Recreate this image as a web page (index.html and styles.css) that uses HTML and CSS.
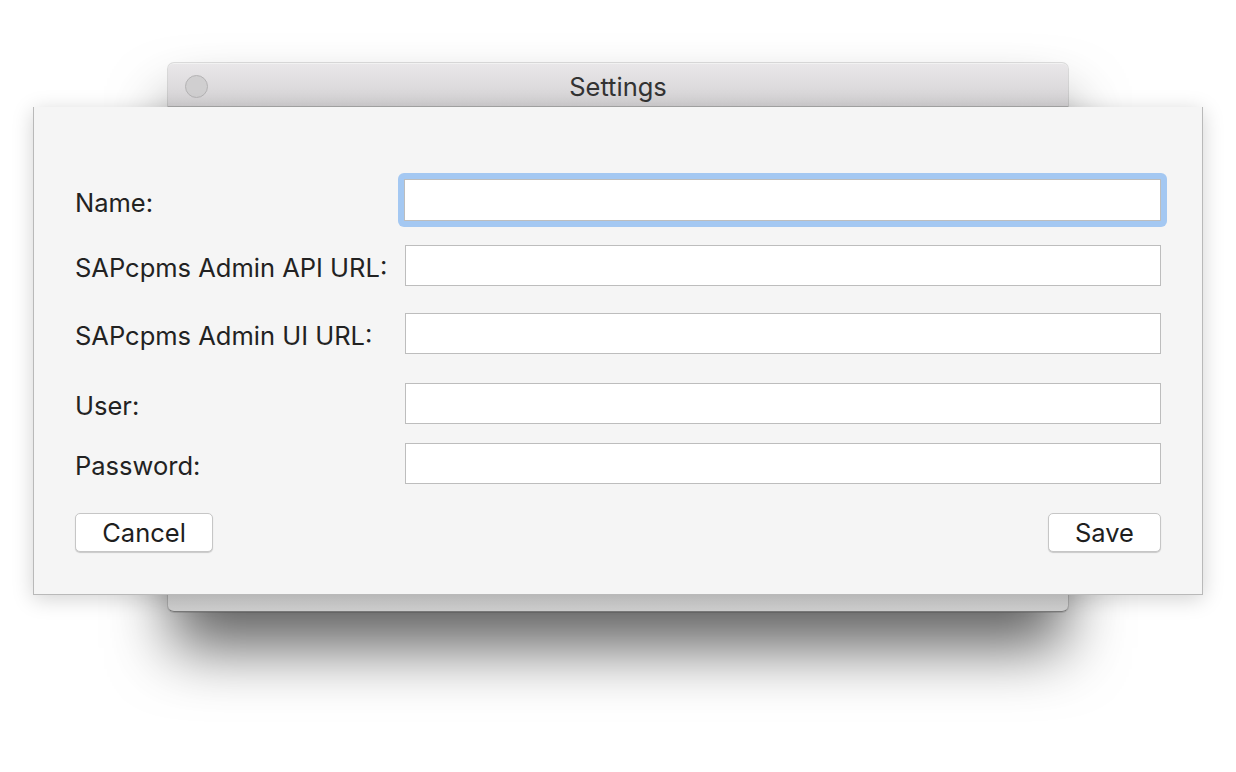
FILE: index.html
```html
<!DOCTYPE html>
<html>
<head>
<meta charset="utf-8">
<link rel="stylesheet" href="styles.css">
</head>
<body>
<div class="desktop">
  <div class="window">
    <div class="titlebar">
      <span class="close"></span>
      <span class="title">Settings</span>
    </div>
    <div class="window-body"></div>
    <div class="sheet">
      <div class="row row-name">
        <label class="label">Name:</label>
        <div class="focus-ring"><input class="field" type="text"></div>
      </div>
      <div class="row row-api">
        <label class="label">SAPcpms Admin API URL:</label>
        <input class="field" type="text">
      </div>
      <div class="row row-ui">
        <label class="label">SAPcpms Admin UI URL:</label>
        <input class="field" type="text">
      </div>
      <div class="row row-user">
        <label class="label">User:</label>
        <input class="field" type="text">
      </div>
      <div class="row row-pass">
        <label class="label">Password:</label>
        <input class="field" type="password">
      </div>
      <div class="buttons">
        <button class="btn btn-cancel">Cancel</button>
        <button class="btn btn-save">Save</button>
      </div>
    </div>
  </div>
</div>
</body>
</html>
```

FILE: styles.css
```css
html, body {
  margin: 0;
  padding: 0;
  background: #ffffff;
  font-family: Inter, "Noto Sans", "Liberation Sans", sans-serif;
}

.desktop {
  width: 1236px;
  height: 772px;
  padding-top: 63px;
  padding-left: 168px;
  box-sizing: border-box;
}

.window {
  position: relative;
  width: 900px;
  height: 549px;
  border-radius: 6px;
  box-shadow: 0 40px 62px -4px rgba(0, 0, 0, 0.62), 0 0 0 1px rgba(0, 0, 0, 0.12);
  display: flex;
  flex-direction: column;
  background: #d4d4d4;
}

.titlebar {
  height: 44px;
  box-sizing: border-box;
  border-radius: 6px 6px 0 0;
  background: linear-gradient(#e9e7e9, #d3d1d3);
  border-top: 1px solid #f2f2f2;
  border-bottom: 1px solid #a9a9a9;
  display: flex;
  align-items: center;
  justify-content: center;
  position: relative;
}

.close {
  position: absolute;
  left: 17px;
  top: 11px;
  width: 23px;
  height: 23px;
  border-radius: 50%;
  background: #d0cfd0;
  border: 1px solid #b4b3b4;
  box-sizing: border-box;
}

.title {
  font-size: 25.5px;
  color: #333333;
  padding-top: 3px;
}

.window-body {
  flex: 1;
  border-radius: 0 0 6px 6px;
  background: linear-gradient(#e2e2e2, #d0d0d0);
  border-bottom: 1px solid #7a7a7a;
}

.sheet {
  position: absolute;
  left: -135px;
  top: 44px;
  width: 1170px;
  height: 488px;
  box-sizing: border-box;
  background: #f5f5f5;
  border: 1px solid #b9b9b9;
  border-top: none;
  box-shadow: 0 4px 20px rgba(0, 0, 0, 0.18);
  padding: 0 41px 0 41px;
  display: flex;
  flex-direction: column;
}

.row {
  display: flex;
  align-items: center;
}

.label {
  width: 330px;
  flex: none;
  font-size: 25.5px;
  color: #222222;
  padding-top: 4px;
}

.field {
  display: block;
  width: 757px;
  height: 41px;
  box-sizing: border-box;
  margin: 0;
  border: 1px solid #bdbdbd;
  background: #ffffff;
  outline: none;
  font-size: 20px;
}

.focus-ring {
  margin-left: -7px;
  padding: 6px;
  border-radius: 6px;
  background: #a4c8f2;
}

.focus-ring .field {
  width: 757px;
  height: 42px;
  border-color: #bdbdbd;
}

.row-name { margin-top: 66px; }
.row-api { margin-top: 18px; }
.row-ui { margin-top: 27px; }
.row-user { margin-top: 29px; }
.row-pass { margin-top: 19px; }

.buttons {
  margin-top: 29px;
  display: flex;
  justify-content: space-between;
}

.btn {
  height: 39px;
  font-family: inherit;
  font-size: 25.5px;
  color: #1e1e1e;
  background: #ffffff;
  border: 1px solid #c6c6c6;
  border-radius: 5px;
  box-shadow: 0 1px 1px rgba(0, 0, 0, 0.18);
  padding: 0;
}

.btn-cancel { width: 138px; }
.btn-save { width: 113px; }
```
